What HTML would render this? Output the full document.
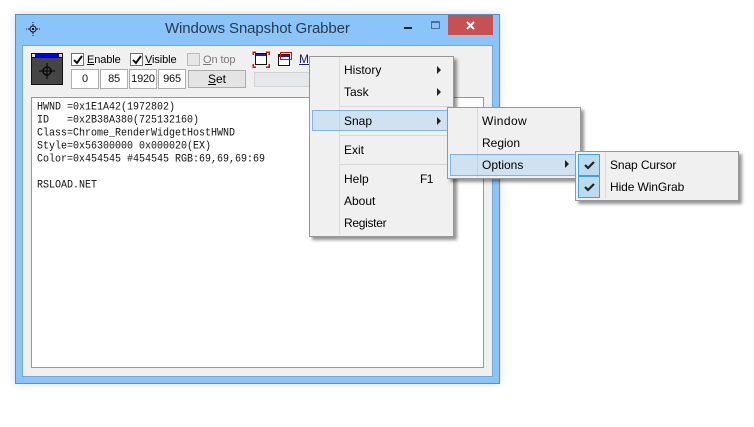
<!DOCTYPE html>
<html><head><meta charset="utf-8">
<style>
html,body{margin:0;padding:0;background:#fff;width:754px;height:427px;overflow:hidden}
body{position:relative;font-family:"Liberation Sans",sans-serif;font-size:12px;color:#000}
div{position:absolute;box-sizing:border-box}
.t{white-space:nowrap;line-height:14px}
.n{font-size:11px;letter-spacing:-.1px}
.win{left:15px;top:14px;width:485px;height:370px;background:#8ac4f8;border:1px solid #5d8fbd;box-shadow:0 0 8px rgba(0,0,0,.15)}
.client{left:22px;top:45px;width:471px;height:332px;background:#f0f0f0;border:1px solid #74a6d6}
.box{background:#fff;border:1px solid #adadad;text-align:center;line-height:18px;height:20px;top:69px;color:#111;font-size:11px;letter-spacing:-.2px}
.chk{width:13px;height:13px;background:#fff;border:1px solid #707070;top:53px}
.log{left:31px;top:97px;width:453px;height:271px;background:#fff;border:1px solid #6fa3d6}
.mono{font-family:"Liberation Mono",monospace;font-size:10px;line-height:12px;left:37px;white-space:pre;color:#111;transform:scale(1,1.1);transform-origin:0 0}
.menu{background:#f0f0f0;border:1px solid #979797;box-shadow:3px 3px 3px rgba(0,0,0,.42)}
.sep{background:#d7d7d7;height:1px}
.vs{background:#dcdcdc;width:1px}
.hl{background:#d0e1f1;border:1px solid #7eb4ea}
.arr{width:0;height:0;border-left:4px solid #222;border-top:4px solid transparent;border-bottom:4px solid transparent}
u{text-decoration:underline}
</style></head><body>
<div class="win"></div>
<svg style="position:absolute;left:25px;top:21px" width="16" height="16"><g stroke="#111" fill="none"><circle cx="8" cy="8" r="3"/><path d="M1 8h1M3 8h2M11 8h2M14 8h1M8 1v1M8 3v2M8 11v2M8 14v1"/></g><rect x="7" y="7" width="2" height="2" fill="#111"/></svg>
<div class="t" style="left:165px;top:20px;font-size:15px;line-height:18px;color:#2b3a4c;letter-spacing:-.12px">Windows Snapshot Grabber</div>
<div style="left:404px;top:27px;width:8px;height:2px;background:#222"></div>
<div style="left:431px;top:21px;width:9px;height:8px;border:1px solid #4f6f8e;border-top-width:2px"></div>
<div style="left:448px;top:15px;width:45px;height:20px;background:#c75050"></div>
<svg style="position:absolute;left:466px;top:21px" width="10" height="10"><path d="M1 1L8 8M8 1L1 8" stroke="#fff" stroke-width="2"/></svg>
<div class="client"></div>

<svg style="position:absolute;left:31px;top:53px" width="32" height="32">
<rect x="0" y="0" width="32" height="32" fill="#111"/>
<rect x="1" y="5" width="30" height="26" fill="#454545"/>
<rect x="4" y="1" width="24" height="3" fill="#0000e8"/>
<rect x="1" y="1" width="3" height="3" fill="#ddd"/><rect x="28" y="1" width="3" height="3" fill="#ddd"/>
<rect x="0" y="4" width="32" height="1" fill="#111"/>
<circle cx="16" cy="18" r="4" stroke="#000" stroke-width="1.3" fill="none"/>
<path d="M8 18h16M16 10v16" stroke="#000" stroke-width="1"/></svg>

<div class="chk" style="left:71px"></div>
<svg style="position:absolute;left:72px;top:54px" width="12" height="12"><path d="M2 6l3 3 5-7" stroke="#111" stroke-width="2" fill="none"/></svg>
<div class="t n" style="left:87px;top:53px"><u>E</u>nable</div>
<div class="chk" style="left:130px"></div>
<svg style="position:absolute;left:131px;top:54px" width="12" height="12"><path d="M2 6l3 3 5-7" stroke="#111" stroke-width="2" fill="none"/></svg>
<div class="t n" style="left:145px;top:53px"><u>V</u>isible</div>
<div class="chk" style="left:187px;background:#e6e6e6;border-color:#bcbcbc"></div>
<div class="t n" style="left:203px;top:53px;color:#7a7a7a"><u>O</u>n top</div>

<div class="box" style="left:71px;width:28px">0</div>
<div class="box" style="left:100px;width:28px">85</div>
<div class="box" style="left:129px;width:28px">1920</div>
<div class="box" style="left:158px;width:28px">965</div>
<div style="left:188px;top:70px;width:58px;height:18px;background:#e4e4e4;border:1px solid #adadad;text-align:center;line-height:16px"><u>S</u>et</div>

<svg style="position:absolute;left:252px;top:50px" width="48" height="22" shape-rendering="crispEdges">
<path d="M1 5V2h3M14 2h3v3M1 14v3h3M14 17h3v-3" stroke="#e01010" stroke-width="1.500" fill="none"/>
<rect x="3.500" y="3.500" width="11" height="11" fill="#fff" stroke="#111"/><rect x="4" y="4" width="10" height="2" fill="#1a1acb"/>
<rect x="26.500" y="4.500" width="11" height="11" fill="#fff" stroke="#111"/><rect x="27" y="5" width="10" height="2" fill="#1a1acb"/>
<rect x="28.500" y="2.500" width="11" height="7" fill="none" stroke="#f00"/>
</svg>
<div class="t" style="left:299px;top:52px;color:#1a1a6e;width:11px;overflow:hidden"><u>Mo</u></div>
<div style="left:254px;top:72px;width:60px;height:15px;background:#e6e8e9;border:1px solid #d2d4d5"></div>

<div class="log"></div>
<div class="mono" style="top:102px">HWND =0x1E1A42(1972802)</div>
<div class="mono" style="top:115px">ID   =0x2B38A380(725132160)</div>
<div class="mono" style="top:128px">Class=Chrome_RenderWidgetHostHWND</div>
<div class="mono" style="top:141px">Style=0x56300000 0x000020(EX)</div>
<div class="mono" style="top:154px">Color=0x454545 #454545 RGB:69,69,69:69</div>
<div class="mono" style="top:180px">RSLOAD.NET</div>

<!-- main menu -->
<div class="menu" style="left:309px;top:56px;width:145px;height:181px"></div>
<div class="vs" style="left:339px;top:57px;height:177px"></div>
<div class="t" style="left:344px;top:63px">History</div>
<div class="arr" style="left:437px;top:66px"></div>
<div class="t" style="left:344px;top:85px">Task</div>
<div class="arr" style="left:437px;top:88px"></div>
<div class="sep" style="left:340px;top:106px;width:112px"></div>
<div class="hl" style="left:312px;top:110px;width:140px;height:21px"></div>
<div class="vs" style="left:339px;top:111px;height:19px;background:#c3d2e0"></div>
<div class="t" style="left:344px;top:114px">Snap</div>
<div class="arr" style="left:437px;top:117px"></div>
<div class="sep" style="left:340px;top:135px;width:112px"></div>
<div class="t" style="left:344px;top:143px">Exit</div>
<div class="sep" style="left:340px;top:164px;width:112px"></div>
<div class="t" style="left:344px;top:172px">Help</div>
<div class="t" style="left:420px;top:172px;letter-spacing:-.6px">F1</div>
<div class="t" style="left:344px;top:194px">About</div>
<div class="t" style="left:344px;top:216px;letter-spacing:-.3px">Register</div>

<!-- snap submenu -->
<div class="menu" style="left:447px;top:107px;width:134px;height:72px"></div>
<div class="vs" style="left:477px;top:108px;height:69px"></div>
<div class="t" style="left:482px;top:114px;letter-spacing:.4px">Window</div>
<div class="t" style="left:482px;top:136px">Region</div>
<div class="hl" style="left:450px;top:154px;width:128px;height:22px"></div>
<div class="vs" style="left:477px;top:155px;height:20px;background:#c3d2e0"></div>
<div class="t" style="left:482px;top:158px">Options</div>
<div class="arr" style="left:565px;top:160px"></div>

<!-- options submenu -->
<div class="menu" style="left:575px;top:151px;width:164px;height:50px"></div>
<div class="vs" style="left:605px;top:152px;height:47px"></div>
<div style="left:578px;top:154px;width:22px;height:22px;background:#bcdcee;border:1px solid #3fa2dc"></div>
<div style="left:578px;top:176px;width:22px;height:22px;background:#bcdcee;border:1px solid #3fa2dc"></div>
<svg style="position:absolute;left:584px;top:160px" width="11" height="10"><path d="M1 5l3 3 6-6" stroke="#222" stroke-width="2.200" fill="none"/></svg>
<svg style="position:absolute;left:584px;top:182px" width="11" height="10"><path d="M1 5l3 3 6-6" stroke="#222" stroke-width="2.200" fill="none"/></svg>
<div class="t" style="left:610px;top:158px;letter-spacing:-.1px">Snap Cursor</div>
<div class="t" style="left:610px;top:180px;letter-spacing:-.1px">Hide WinGrab</div>
</body></html>
